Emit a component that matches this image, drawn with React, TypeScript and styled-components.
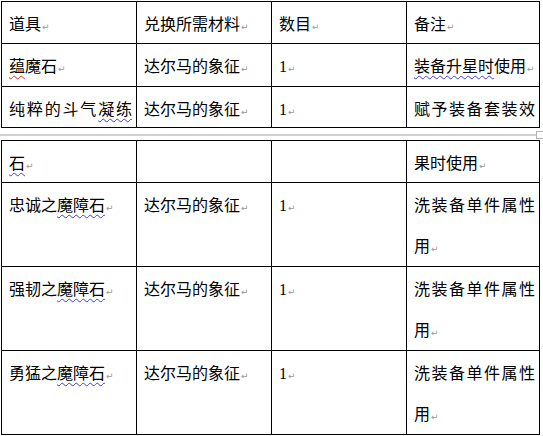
import React from 'react'
import styled, { createGlobalStyle } from 'styled-components'

const GlobalStyle = createGlobalStyle`
  html, body {
    margin: 0;
    padding: 0;
    background: #fff;
  }
  body {
    font-family: "Liberation Serif", "Noto Sans CJK SC", serif;
    color: #000;
  }
`

const Page = styled.div`
  position: relative;
  width: 543px;
  height: 436px;
  overflow: hidden;
  padding: 1px 0 0 1px;
  box-sizing: border-box;
`

const Table = styled.div`
  display: grid;
  grid-template-columns: 135px 135px 135px 133px;
  width: max-content;
  border-left: 1px solid #000;
  border-top: 1px solid #000;
`

const Cell = styled.div<{ $h: number }>`
  height: ${(p) => p.$h}px;
  box-sizing: border-box;
  padding: 2px 4px 0 7px;
  border-right: 1px solid #000;
  border-bottom: 1px solid #000;
  font-size: 16px;
  line-height: 41px;
  text-align: justify;
  overflow: hidden;
`

const Mark = styled.span`
  font-family: "DejaVu Sans", sans-serif;
  font-size: 9px;
  color: #9a9a9a;
  margin-left: 1px;
`

const Squiggle = styled.span<{ $color: string }>`
  text-decoration: underline wavy ${(p) => p.$color};
  text-decoration-thickness: 1px;
  text-underline-offset: 3px;
`

const PageBreak = styled.div`
  height: 12px;
  box-sizing: border-box;
  padding-top: 6px;
`

const BreakLine = styled.div`
  width: 542px;
  margin-left: -1px;
  height: 2px;
  background: #d2d2d2;
`

const Handle = styled.div`
  position: absolute;
  left: 536px;
  top: 131px;
  width: 8px;
  height: 8px;
  box-sizing: border-box;
  border: 1px solid #b4b4b4;
  background: #fff;
`

const BLUE = '#3c3cf0'
const RED = '#e8282a'

const P = () => <Mark>↵</Mark>

type Row = { h: number; cells: React.ReactNode[] }

const firstPage: Row[] = [
  {
    h: 42,
    cells: [
      <>道具<P /></>,
      <>兑换所需材料<P /></>,
      <>数目<P /></>,
      <>备注<P /></>,
    ],
  },
  {
    h: 43,
    cells: [
      <><Squiggle $color={RED}>蕴</Squiggle>魔石<P /></>,
      <>达尔马的象征<P /></>,
      <>1<P /></>,
      <><Squiggle $color={BLUE}>装备升星时</Squiggle>使用<P /></>,
    ],
  },
  {
    h: 41,
    cells: [
      <>纯粹的斗气<Squiggle $color={BLUE}>凝练石</Squiggle></>,
      <>达尔马的象征<P /></>,
      <>1<P /></>,
      <>赋予装备套装效果时使用</>,
    ],
  },
]

const secondPage: Row[] = [
  {
    h: 42,
    cells: [<><Squiggle $color={BLUE}>石</Squiggle><P /></>, null, null, <>果时使用<P /></>],
  },
  ...['忠诚之', '强韧之', '勇猛之'].map((prefix) => ({
    h: 84,
    cells: [
      <>{prefix}<Squiggle $color={BLUE}>魔障石</Squiggle><P /></>,
      <>达尔马的象征<P /></>,
      <>1<P /></>,
      <>洗装备单件属性用<P /></>,
    ],
  })),
]

function DocTable({ rows }: { rows: Row[] }) {
  return (
    <Table>
      {rows.map((row, r) =>
        row.cells.map((content, c) => (
          <Cell key={`${r}-${c}`} $h={row.h}>
            {content}
          </Cell>
        )),
      )}
    </Table>
  )
}

export default function App() {
  return (
    <Page>
      <GlobalStyle />
      <DocTable rows={firstPage} />
      <PageBreak>
        <BreakLine />
      </PageBreak>
      <DocTable rows={secondPage} />
      <Handle />
    </Page>
  )
}
